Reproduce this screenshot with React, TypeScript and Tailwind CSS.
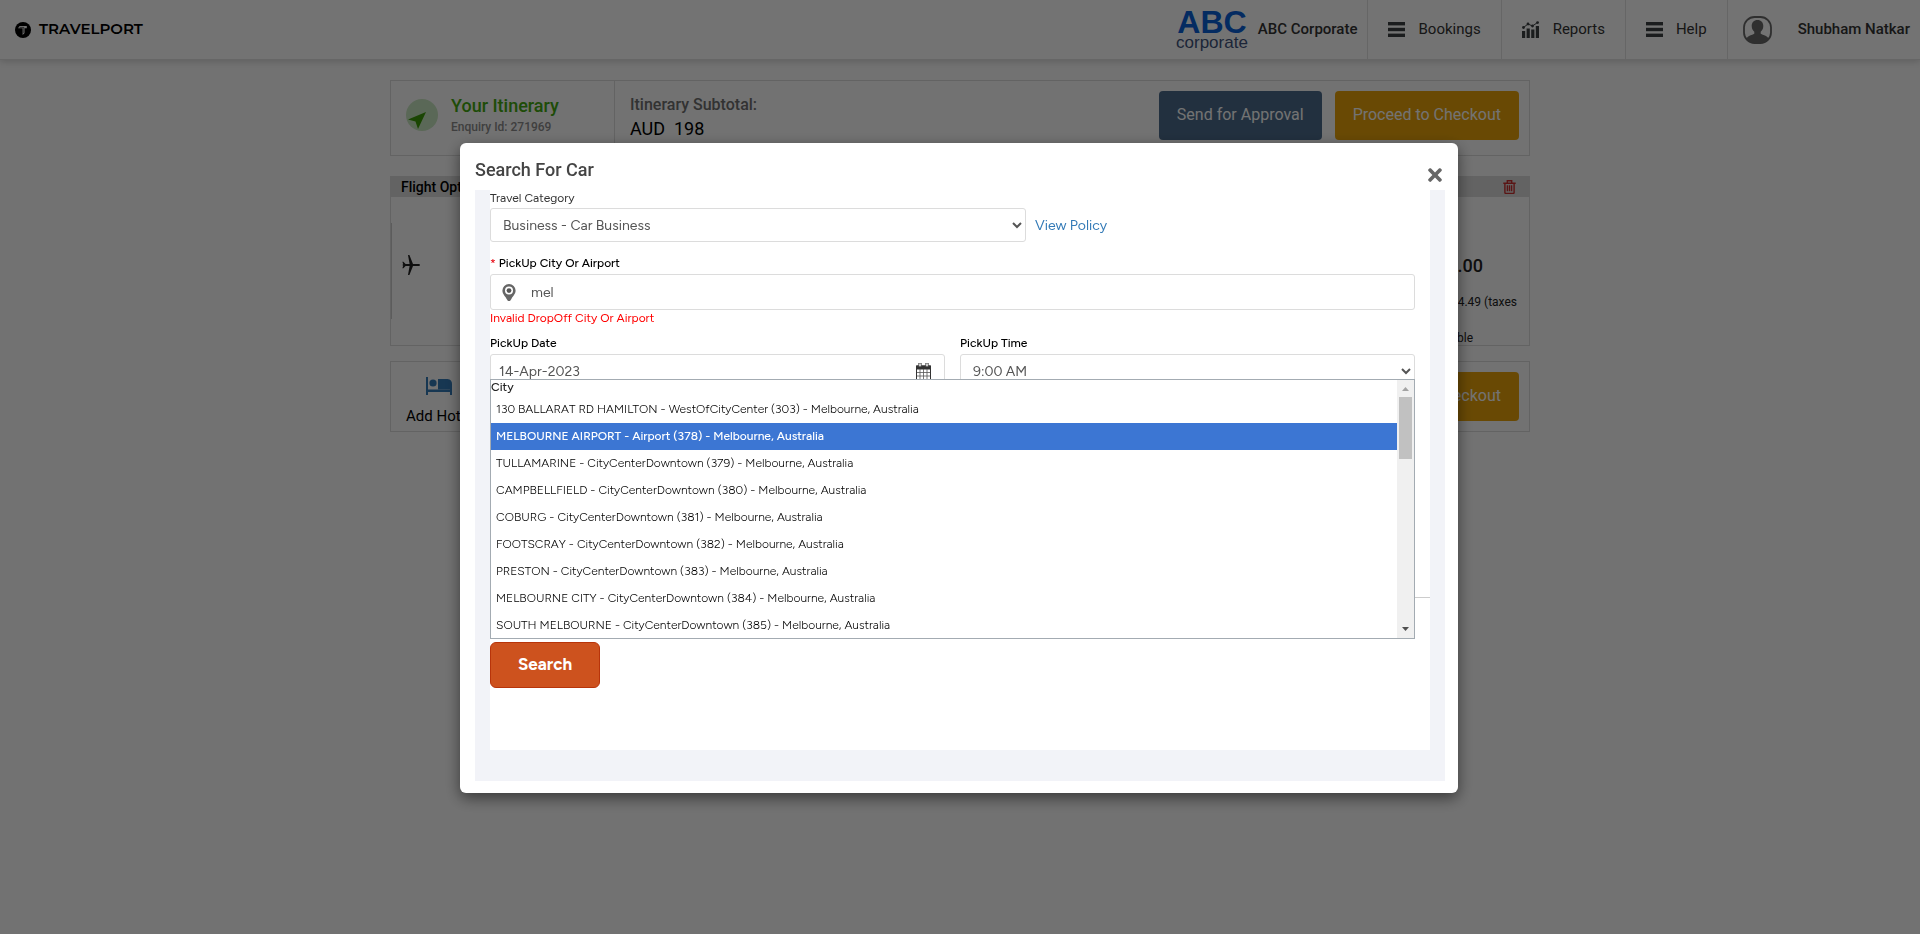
import type { ReactNode } from "react";
import { FaTimes } from "react-icons/fa";

const locations = [
  "130 BALLARAT RD HAMILTON - WestOfCityCenter (303) - Melbourne, Australia",
  "MELBOURNE AIRPORT - Airport (378) - Melbourne, Australia",
  "TULLAMARINE - CityCenterDowntown (379) - Melbourne, Australia",
  "CAMPBELLFIELD - CityCenterDowntown (380) - Melbourne, Australia",
  "COBURG - CityCenterDowntown (381) - Melbourne, Australia",
  "FOOTSCRAY - CityCenterDowntown (382) - Melbourne, Australia",
  "PRESTON - CityCenterDowntown (383) - Melbourne, Australia",
  "MELBOURNE CITY - CityCenterDowntown (384) - Melbourne, Australia",
  "SOUTH MELBOURNE - CityCenterDowntown (385) - Melbourne, Australia",
];

const selectedLocation = 1;

function TravelportMark() {
  return (
    <svg viewBox="0 0 16 16" className="size-4" aria-hidden="true">
      <circle cx="8" cy="8" r="8" fill="#000" />
      <path d="M3 6.2 4.6 4h7.2v2.2H9.6V11L7.6 13V6.2Z" fill="#fff" />
      <path d="M4.6 5.4h4.2V11" fill="none" stroke="#000" strokeWidth=".6" />
    </svg>
  );
}

function MenuIcon() {
  return (
    <svg viewBox="0 0 17 15" className="h-[15px] w-[17px]" fill="#3c4144" aria-hidden="true">
      <rect width="17" height="3.4" />
      <rect y="5.8" width="17" height="3.4" />
      <rect y="11.6" width="17" height="3.4" />
    </svg>
  );
}

function ReportsIcon() {
  return (
    <svg viewBox="0 0 18 17" className="h-[17px] w-[18px]" fill="#3c4144" aria-hidden="true">
      <rect x="0" y="10" width="3.2" height="7" />
      <rect x="4.6" y="7.5" width="3.2" height="9.5" />
      <rect x="9.2" y="8.5" width="3.2" height="8.5" />
      <rect x="13.8" y="5" width="3.2" height="12" />
      <path d="M1.5 6.5 6 3l4.5 2L15.5 1.5" fill="none" stroke="#3c4144" />
      <circle cx="1.5" cy="6.5" r="1.4" />
      <circle cx="6" cy="3" r="1.4" />
      <circle cx="10.5" cy="5" r="1.4" />
      <circle cx="15.6" cy="1.6" r="1.4" />
    </svg>
  );
}

function UserIcon() {
  return (
    <svg viewBox="0 0 29 28" className="h-7 w-[29px]" aria-hidden="true">
      <rect x="1" y="1" width="27" height="26" rx="10.5" fill="none" stroke="#686868" strokeWidth="1.8" />
      <path
        d="M14.5 4c3.6 0 5.8 2.6 5.8 6 0 2.7-1.3 4.6-2.6 5.8v2c2.5 1.4 6.3 2 8 4.6-1.7 3-4.2 4.6-7.7 4.6h-7c-3.500 0-6-1.600-7.700-4.600 1.700-2.600 5.500-3.200 8-4.600v-2C10 14.600 8.700 12.700 8.700 10c0-3.400 2.200-6 5.800-6Z"
        fill="#686868"
      />
    </svg>
  );
}

function TrashIcon() {
  return (
    <svg viewBox="0 0 13 14" className="h-3.5 w-[13px]" fill="none" stroke="#c8302f" strokeWidth="1.4" aria-hidden="true">
      <path d="M.3 3.2h12.4M4.3 3V.8h4.4V3M1.9 3.2v9.400q0 .8.8.8h7.600q.8 0 .8-.8V3.200M4.400 5.200v6M6.500 5.200v6M8.600 5.200v6" />
    </svg>
  );
}

function PlaneIcon() {
  return (
    <svg viewBox="0 0 18 20" className="h-5 w-[18px]" fill="#222" aria-hidden="true">
      <path d="M18 10c0 .7-.8 1-1.6 1H11L7.4 20H6l1.600-9H3.600L1.400 13.200H.4L1.200 10.600 0 10l1.200-.6L.4 6.800h1L3.600 9h4L6 0h1.400L11 9h5.400c.8 0 1.600.3 1.600 1Z" />
    </svg>
  );
}

function BedIcon() {
  return (
    <svg viewBox="0 0 26 18" className="h-[18px] w-[26px]" fill="#337ab7" aria-hidden="true">
      <path d="M0 0h2v12.500h22V10h2v8h-2v-3H2v3H0Z" />
      <circle cx="7" cy="6" r="3.600" />
      <path d="M12 2h9.500Q26 2.500 26 7v5.500H12Z" />
    </svg>
  );
}

function PinIcon() {
  return (
    <svg viewBox="0 0 14 17" className="h-[17px] w-3.5" aria-hidden="true">
      <path d="M7 0a6.600 6.600 0 0 1 6.600 6.600C13.600 10.500 10 13 9.400 15L8 17H6L4.600 15C4 13 .4 10.500.4 6.600A6.600 6.600 0 0 1 7 0Z" fill="#666" />
      <circle cx="7" cy="6.600" r="4" fill="#fff" />
      <circle cx="7" cy="6.600" r="2.400" fill="#555" />
    </svg>
  );
}

function CalendarIcon() {
  return (
    <svg viewBox="0 0 15 17" className="h-[17px] w-[15px]" aria-hidden="true">
      <path d="M.5 3h14v13.500H.5Z" fill="#fff" stroke="#333" />
      <path d="M0 2.500h15V6.500H0Z" fill="#333" />
      <path d="M4 6v10M7.500 6v10M11 6v10M1 9.500h13M1 13h13" stroke="#555" strokeWidth=".8" />
      <path d="M2.800 0h2.400v3.800H2.800ZM9.800 0h2.400v3.800H9.800Z" fill="#fff" stroke="#333" strokeWidth=".8" />
    </svg>
  );
}

function NavLink({ icon, children }: { icon: ReactNode; children: string }) {
  return (
    <a href="#" className="flex h-full items-center gap-[13px] border-l border-[#e2e2e2] px-5 text-[15px] text-[#333]">
      {icon}
      {children}
    </a>
  );
}

function Header() {
  return (
    <header className="flex h-[60px] items-center justify-between border-b border-[#e2e2e2] bg-white shadow-[0_2px_6px_rgba(0,0,0,0.15)]">
      <a href="#" className="flex items-center gap-2 pl-[15px] font-[Montserrat,Inter,sans-serif] text-[15px] font-semibold text-black">
        <TravelportMark />
        TRAVELPORT
      </a>
      <nav className="flex h-full items-center">
        <div className="mr-2.5 flex flex-col items-center font-['Liberation_Sans',sans-serif]">
          <span className="text-[32px] leading-[26px] font-bold text-[#0a5fd8]">ABC</span>
          <span className="text-[17px] leading-4 text-[#3f537c]">corporate</span>
        </div>
        <span className="mr-2.5 text-[15px] font-medium text-[#333]">ABC Corporate</span>
        <NavLink icon={<MenuIcon />}>Bookings</NavLink>
        <NavLink icon={<ReportsIcon />}>Reports</NavLink>
        <NavLink icon={<MenuIcon />}>Help</NavLink>
        <a href="#" className="flex h-full items-center gap-[26px] border-l border-[#e2e2e2] pr-2.5 pl-[15px] text-[15px] font-medium text-[#333]">
          <UserIcon />
          Shubham Natkar
        </a>
      </nav>
    </header>
  );
}

function CheckoutButton() {
  return (
    <button type="button" className="h-[49px] rounded bg-[#e9a30a] px-[18px] pb-0.5 text-[16px] text-white">
      Proceed to Checkout
    </button>
  );
}

function ItineraryPage() {
  return (
    <main className="mx-auto mt-5 max-w-[1140px]">
      <section className="flex h-[76px] border border-[#dcdcdc]">
        <div className="flex w-[224px] items-start border-r border-[#dcdcdc] pt-[15px] pl-[15px]">
          <svg viewBox="0 0 32 32" className="mt-[3px] mr-[13px] size-8" aria-hidden="true">
            <circle cx="16" cy="16" r="16" fill="#c8e6c0" />
            <path d="M20 13 12 30 9.500 22.500 2 20.500Z" fill="#3a9c07" />
          </svg>
          <div>
            <h1 className="text-[18px] leading-5 font-medium text-[#43a810]">Your Itinerary</h1>
            <p className="text-[12px] leading-[22px] font-medium text-[#8c8c8c]">Enquiry Id: 271969</p>
          </div>
        </div>
        <div className="pt-3 pl-[15px]">
          <p className="text-[16px] leading-6 font-medium text-[#707070]">Itinerary Subtotal:</p>
          <p className="text-[18px] leading-6 whitespace-pre text-black">AUD  198</p>
        </div>
        <div className="ml-auto flex items-start gap-[13px] pt-2.5 pr-2.5">
          <button type="button" className="h-[49px] rounded bg-[#4c6b8c] px-[18px] pb-0.5 text-[16px] text-white">
            Send for Approval
          </button>
          <CheckoutButton />
        </div>
      </section>

      <section className="mt-5 h-[170px] border border-[#dcdcdc]">
        <div className="flex h-5 items-center justify-between bg-[#dcdcdc] pr-[13px] pl-2.5">
          <h2 className="text-[14px] font-medium text-black">Flight Options</h2>
          <button type="button" aria-label="Remove flight">
            <TrashIcon />
          </button>
        </div>
        <div className="flex items-start justify-between">
          <div className="mt-[26px] flex h-24 items-start border-l border-[#ccc] pt-8 pl-2.5">
            <PlaneIcon />
          </div>
          <div className="flex flex-col items-end pt-[57px] pr-3 text-[12px] leading-[18px] whitespace-nowrap text-[#222]">
            <p className="pr-[34px] text-[18px] leading-6 font-medium">AUD 198.00</p>
            <p className="pt-[15px]">AUD 34.49 (taxes</p>
            <p className="pt-[18px] pr-11">Non Refundable</p>
          </div>
        </div>
      </section>

      <section className="mt-[15px] flex h-[71px] items-start justify-between border border-[#dcdcdc] pt-2.5 pr-2.5 pl-[15px]">
        <button type="button" className="flex flex-col items-center gap-[11px] pt-[5px] text-[15px] leading-5 text-black">
          <BedIcon />
          Add Hotel
        </button>
        <CheckoutButton />
      </section>
    </main>
  );
}

function SuggestionList() {
  return (
    <div className="absolute inset-x-0 top-[125px] z-10 flex h-[260px] border border-[#a3abb2] bg-white">
      <div className="grow overflow-hidden text-[12px] text-[#333]">
        <div id="group-city" className="h-4 leading-[14px] font-medium text-[#222]">City</div>
        <ul role="listbox" aria-labelledby="group-city">
          {locations.map((name, i) => (
            <li
              key={name}
              role="option"
              aria-selected={i === selectedLocation}
              className={
                i === selectedLocation
                  ? "h-[27px] bg-[#3c76d3] pl-[5px] leading-[27px] font-medium text-white"
                  : "h-[27px] pl-[5px] leading-[27px] font-light text-black"
              }
            >
              {name}
            </li>
          ))}
        </ul>
      </div>
      <div className="flex w-[17px] flex-col items-center bg-[#f0f0f0]">
        <svg viewBox="0 0 17 17" className="size-[17px]" aria-hidden="true">
          <path d="M5 11h7L8.500 7Z" fill="#a3a3a3" />
        </svg>
        <div className="h-[62px] w-[13px] bg-[#c1c1c1]" />
        <svg viewBox="0 0 17 17" className="mt-auto size-[17px]" aria-hidden="true">
          <path d="M5 6h7L8.500 10Z" fill="#505050" />
        </svg>
      </div>
    </div>
  );
}

function SearchCarDialog() {
  return (
    <div className="fixed inset-0 flex items-start justify-center bg-black/55 pt-[143px] pr-0.5">
      <div
        role="dialog"
        aria-labelledby="dialog-title"
        className="w-[998px] max-w-full rounded-md bg-white pr-[13px] pb-3 pl-[15px] shadow-[0_5px_15px_rgba(0,0,0,0.5)]"
      >
        <div className="flex h-[47px] items-start justify-between">
          <h2 id="dialog-title" className="pt-[15px] text-[18px] leading-6 font-medium text-[#444]">Search For Car</h2>
          <button type="button" aria-label="Close" className="pt-[22px]">
            <FaTimes className="size-5 text-[#666]" />
          </button>
        </div>
        <div className="bg-[#f2f3f8] px-[15px] pb-[31px]">
          <form className="bg-white pb-[62px] font-[Figtree,'Proxima_Nova',Lato,sans-serif] text-[14px] text-[#555]">
            <div className="pr-[15px]">
              <label htmlFor="category" className="block h-[18px] text-[12px] leading-4 text-[#333]">Travel Category</label>
              <div className="flex items-center gap-[9px]">
                <select id="category" className="h-[34px] w-[536px] rounded-[3px] border border-[#dcdcdc] bg-white pl-2">
                  <option>Business - Car Business</option>
                </select>
                <a href="#" className="text-[#337ab7]">View Policy</a>
              </div>

              <div className="relative mt-3">
                <label htmlFor="pickup" className="block h-5 text-[12px] leading-[18px] font-medium text-black">
                  <span className="text-red-600">*</span> PickUp City Or Airport
                </label>
                <div className="flex h-9 items-center gap-[15px] rounded-[3px] border border-[#dcdcdc] pl-[11px]">
                  <PinIcon />
                  <input id="pickup" defaultValue="mel" className="h-full grow outline-none" />
                </div>
                <p className="h-4 text-[12px] leading-4 text-[#f00]">Invalid DropOff City Or Airport</p>
                <SuggestionList />
              </div>

              <div className="mt-2 grid grid-cols-2 gap-[15px]">
                <div>
                  <label htmlFor="date" className="block h-5 text-[12px] leading-[18px] font-medium text-black">PickUp Date</label>
                  <div className="flex h-[34px] items-center rounded-[3px] border border-[#dcdcdc] pr-[13px] pl-2">
                    <input id="date" defaultValue="14-Apr-2023" className="h-full grow outline-none" />
                    <CalendarIcon />
                  </div>
                </div>
                <div>
                  <label htmlFor="time" className="block h-5 text-[12px] leading-[18px] font-medium text-black">PickUp Time</label>
                  <select id="time" defaultValue="9:00 AM" className="h-[34px] w-full rounded-[3px] border border-[#dcdcdc] bg-white pl-2">
                    <option>9:00 AM</option>
                  </select>
                </div>
              </div>
            </div>
            <hr className="mt-[209px] border-[#ccc]" />
            <button type="submit" className="mt-11 h-[46px] w-[110px] rounded-md border border-[#b8340a] bg-[#cd521e] text-[17px] font-bold text-white">
              Search
            </button>
          </form>
        </div>
      </div>
    </div>
  );
}

export default function App() {
  return (
    <div className="min-h-screen bg-[#fcfcfc] font-[Roboto,sans-serif]">
      <Header />
      <ItineraryPage />
      <SearchCarDialog />
    </div>
  );
}
